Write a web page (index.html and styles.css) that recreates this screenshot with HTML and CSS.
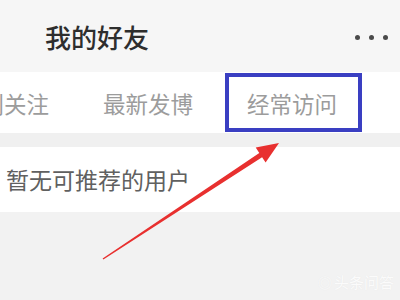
FILE: index.html
```html
<!DOCTYPE html>
<html lang="zh">
<head>
<meta charset="utf-8">
<link rel="stylesheet" href="styles.css">
</head>
<body>
<div class="page">
  <header class="header">
    <h1 class="title">我的好友</h1>
    <div class="more"><span class="dot"></span><span class="dot"></span><span class="dot"></span></div>
  </header>
  <nav class="tabs">
    <span class="tab">特别关注</span>
    <span class="tab">最新发博</span>
    <span class="tab">经常访问</span>
  </nav>
  <div class="sep"></div>
  <div class="empty">暂无可推荐的用户</div>
  <div class="rest"></div>
  <div class="highlight"></div>
  <svg class="arrow" width="400" height="300" viewBox="0 0 400 300">
    <polygon fill="#e8302f" points="102.6,258.4 259.3,153.0 255.7,147.6 279,143 265.6,162.6 262.1,157.2 103.4,259.6"/>
  </svg>
  <div class="watermark"><span class="wm-icon">◎</span>头条问答</div>
</div>
</body>
</html>
```
FILE: styles.css
```css
html, body {
  margin: 0;
  padding: 0;
}
body {
  width: 400px;
  height: 300px;
  overflow: hidden;
  background: #f2f2f2;
  font-family: "Noto Sans CJK SC", "Noto Sans", sans-serif;
}
.page {
  position: relative;
  width: 400px;
  height: 300px;
  overflow: hidden;
}
.header {
  height: 72px;
  background: #f6f6f6;
  display: flex;
  align-items: center;
  justify-content: space-between;
  padding: 0 12px 0 45px;
  box-sizing: border-box;
}
.title {
  margin: 0;
  font-size: 26px;
  font-weight: 500;
  color: #2e2e2e;
  line-height: 1;
  margin-top: 1px;
}
.more {
  display: flex;
  gap: 9px;
  margin-top: 2px;
}
.dot {
  width: 5px;
  height: 5px;
  border-radius: 50%;
  background: #4a4a4a;
}
.tabs {
  height: 61px;
  background: #fff;
  display: flex;
  align-items: center;
  gap: 54px;
  margin-left: -41px;
  box-sizing: border-box;
}
.tab {
  font-size: 22.5px;
  color: #9c9c9c;
  white-space: nowrap;
  line-height: 1;
  margin-top: 1px;
}
.sep {
  height: 14px;
  background: #f0f0f0;
}
.empty {
  height: 65px;
  background: #fff;
  display: flex;
  align-items: center;
  padding-left: 6px;
  font-size: 23px;
  color: #606060;
  line-height: 1;
}
.highlight {
  position: absolute;
  left: 225px;
  top: 73px;
  width: 137px;
  height: 59px;
  box-sizing: border-box;
  border: 4px solid #3a3fc2;
}
.arrow {
  position: absolute;
  left: 0;
  top: 0;
}
.watermark {
  position: absolute;
  right: 6px;
  bottom: 8px;
  font-size: 15px;
  color: #fbfbfb;
  text-shadow: 0 0 1px #e4e4e4;
  display: flex;
  align-items: center;
  gap: 2px;
}
.wm-icon {
  font-size: 14px;
}
```
